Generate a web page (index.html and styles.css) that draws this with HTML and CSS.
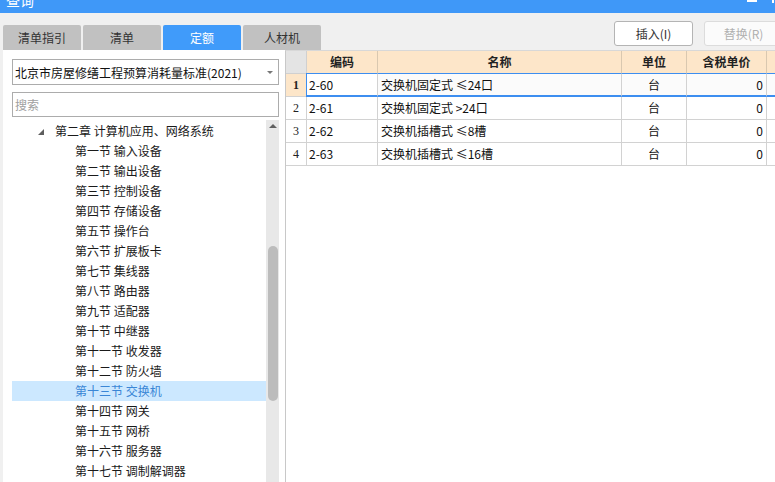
FILE: index.html
```html
<!DOCTYPE html>
<html lang="zh-CN">
<head>
<meta charset="utf-8">
<title>查询</title>
<link rel="stylesheet" href="styles.css">
</head>
<body>
<div class="window">
  <div class="titlebar">
    <span class="title-text">查询</span>
    <span class="ctl ctl-min"></span>
    <span class="ctl ctl-close"></span>
  </div>
  <div class="toolbar">
    <div class="tabs">
      <div class="tab">清单指引</div>
      <div class="tab">清单</div>
      <div class="tab active">定额</div>
      <div class="tab">人材机</div>
    </div>
    <div class="actions">
      <button class="btn">插入(I)</button>
      <button class="btn disabled">替换(R)</button>
    </div>
  </div>
  <div class="main">
    <div class="left">
      <div class="select">
        <span class="select-text">北京市房屋修缮工程预算消耗量标准(2021)</span>
        <span class="select-arrow"></span>
      </div>
      <div class="search">搜索</div>
      <div class="tree-area">
        <ul class="tree">
          <li class="chapter"><span class="expander"></span>第二章 计算机应用、网络系统</li>
          <li class="section">第一节 输入设备</li>
          <li class="section">第二节 输出设备</li>
          <li class="section">第三节 控制设备</li>
          <li class="section">第四节 存储设备</li>
          <li class="section">第五节 操作台</li>
          <li class="section">第六节 扩展板卡</li>
          <li class="section">第七节 集线器</li>
          <li class="section">第八节 路由器</li>
          <li class="section">第九节 适配器</li>
          <li class="section">第十节 中继器</li>
          <li class="section">第十一节 收发器</li>
          <li class="section">第十二节 防火墙</li>
          <li class="section selected">第十三节 交换机</li>
          <li class="section">第十四节 网关</li>
          <li class="section">第十五节 网桥</li>
          <li class="section">第十六节 服务器</li>
          <li class="section">第十七节 调制解调器</li>
        </ul>
        <div class="scrollbar">
          <span class="scroll-up"></span>
          <span class="scroll-thumb"></span>
        </div>
      </div>
    </div>
    <div class="right">
      <div class="grid">
        <div class="c hd corner"></div>
        <div class="c hd">编码</div>
        <div class="c hd">名称</div>
        <div class="c hd">单位</div>
        <div class="c hd">含税单价</div>
        <div class="c hd"></div>

        <div class="c num cur">1</div>
        <div class="c code sel first">2-60</div>
        <div class="c name sel">交换机固定式 ≤24口</div>
        <div class="c unit sel">台</div>
        <div class="c price sel">0</div>
        <div class="c sel"></div>

        <div class="c num">2</div>
        <div class="c code">2-61</div>
        <div class="c name">交换机固定式 &gt;24口</div>
        <div class="c unit">台</div>
        <div class="c price">0</div>
        <div class="c"></div>

        <div class="c num">3</div>
        <div class="c code">2-62</div>
        <div class="c name">交换机插槽式 ≤8槽</div>
        <div class="c unit">台</div>
        <div class="c price">0</div>
        <div class="c"></div>

        <div class="c num">4</div>
        <div class="c code">2-63</div>
        <div class="c name">交换机插槽式 ≤16槽</div>
        <div class="c unit">台</div>
        <div class="c price">0</div>
        <div class="c"></div>
      </div>
    </div>
  </div>
</div>
</body>
</html>
```
FILE: styles.css
```css
* { box-sizing: border-box; }
html, body {
  margin: 0;
  padding: 0;
  width: 775px;
  height: 482px;
  overflow: hidden;
  background: #f0f0f0;
  font-family: "Noto Sans CJK SC", "Noto Sans", sans-serif;
  font-size: 12px;
  color: #222;
}
.window {
  width: 775px;
  height: 482px;
  display: flex;
  flex-direction: column;
  overflow: hidden;
}
.titlebar {
  height: 13px;
  flex: none;
  background: #3f98f8;
  display: flex;
  overflow: hidden;
  padding-left: 6px;
}
.title-text {
  color: #fff;
  font-size: 14px;
  line-height: 14px;
  margin-top: -7px;
  display: block;
}
.ctl {
  display: block;
  background: #fff;
}
.ctl-min {
  margin-left: auto;
  width: 10px;
  height: 2px;
}
.ctl-close {
  margin-left: 15px;
  margin-right: 1px;
  width: 2px;
  height: 3px;
}
.toolbar {
  height: 37px;
  flex: none;
  display: flex;
}
.tabs {
  display: flex;
  gap: 2px;
  align-self: flex-end;
  padding-left: 3px;
}
.tab {
  width: 78px;
  height: 25px;
  background: #c1c1c1;
  border-radius: 2px 2px 0 0;
  color: #333;
  font-size: 12px;
  line-height: 25px;
  text-align: center;
}
.tab.active {
  background: #409bfa;
  color: #fff;
}
.actions {
  margin-left: auto;
  display: flex;
  gap: 11px;
  padding-top: 8px;
  margin-right: -8px;
}
.btn {
  width: 79px;
  height: 25px;
  border: 1px solid #b4b4b4;
  border-radius: 3px;
  background: #fff;
  font-family: inherit;
  font-size: 12px;
  color: #333;
  padding: 0;
}
.btn.disabled {
  border-color: #dcdcdc;
  background: #fbfbfb;
  color: #b0b0b0;
}
.main {
  flex: 1;
  display: flex;
  min-height: 0;
}
.left {
  width: 282px;
  margin-left: 3px;
  background: #fff;
  padding: 9px 6px 0 9px;
  display: flex;
  flex-direction: column;
}
.select {
  height: 26px;
  border: 1px solid #acacac;
  display: flex;
  align-items: center;
  padding-left: 2px;
}
.select-text {
  flex: 1;
  color: #111;
  font-size: 12px;
}
.select-arrow {
  width: 0;
  height: 0;
  border-left: 3px solid transparent;
  border-right: 3px solid transparent;
  border-top: 3px solid #777;
  margin-right: 5px;
}
.search {
  margin-top: 7px;
  height: 25px;
  border: 1px solid #acacac;
  padding-left: 2px;
  line-height: 23px;
  color: #a0a0a0;
  font-size: 12px;
}
.tree-area {
  margin-top: 3px;
  flex: 1;
  display: flex;
  min-height: 0;
}
.tree {
  list-style: none;
  margin: 0;
  padding: 1px 0 0 0;
  flex: 1;
}
.tree li {
  height: 20px;
  line-height: 20px;
  white-space: nowrap;
  color: #1a1a1a;
}
.chapter {
  display: flex;
  align-items: center;
  padding-left: 26px;
}
.expander {
  width: 0;
  height: 0;
  border-left: 6px solid transparent;
  border-bottom: 6px solid #5e5e5e;
  margin-right: 11px;
  margin-top: 1px;
}
.section {
  padding-left: 63px;
}
.section.selected {
  background: #cce8ff;
  color: #3a86d6;
}
.scrollbar {
  width: 13px;
  background: #e8e8e8;
  display: flex;
  flex-direction: column;
  align-items: center;
}
.scroll-up {
  margin-top: 4px;
  width: 0;
  height: 0;
  border-left: 4px solid transparent;
  border-right: 4px solid transparent;
  border-bottom: 4px solid #606060;
}
.scroll-thumb {
  margin-top: 118px;
  width: 10px;
  height: 155px;
  border-radius: 5px;
  background: #bcbcbc;
}
.right {
  flex: 1;
  background: #fff;
  border-left: 1px solid #c8c8c8;
  border-top: 1px solid #d8d8d8;
  overflow: hidden;
}
.grid {
  display: grid;
  grid-template-columns: 21px 71px 244px 65px 80px 40px;
  grid-auto-rows: 23px;
  width: 521px;
}
.c {
  border-right: 1px solid #d2d2d2;
  border-bottom: 1px solid #d2d2d2;
  font-size: 12px;
  line-height: 22px;
  white-space: nowrap;
  overflow: hidden;
  color: #111;
}
.hd {
  background: #fde6c9;
  font-weight: bold;
  text-align: center;
  color: #222;
  border-right-color: #d9c8b0;
  border-bottom-color: #d0d0d0;
}
.hd.corner {
  background: #e4e4e4;
  border-right-color: #d0d0d0;
}
.num {
  text-align: center;
  font-family: "Liberation Serif", "DejaVu Serif", serif;
  font-size: 12px;
  color: #222;
}
.num.cur {
  background: #fde6c9;
  font-weight: bold;
}
.code {
  padding-left: 2px;
}
.name {
  padding-left: 3px;
}
.unit {
  text-align: center;
}
.price {
  text-align: right;
  padding-right: 3px;
}
.sel {
  background: #fbfbfb;
  border-top: 1px solid #3d8ef0;
  border-bottom: 2px solid #3d8ef0;
  margin-top: -1px;
  height: 24px;
  line-height: 21px;
}
.sel.first {
  background: #fff;
  border-left: 1px solid #3d8ef0;
  margin-left: -1px;
}
```
